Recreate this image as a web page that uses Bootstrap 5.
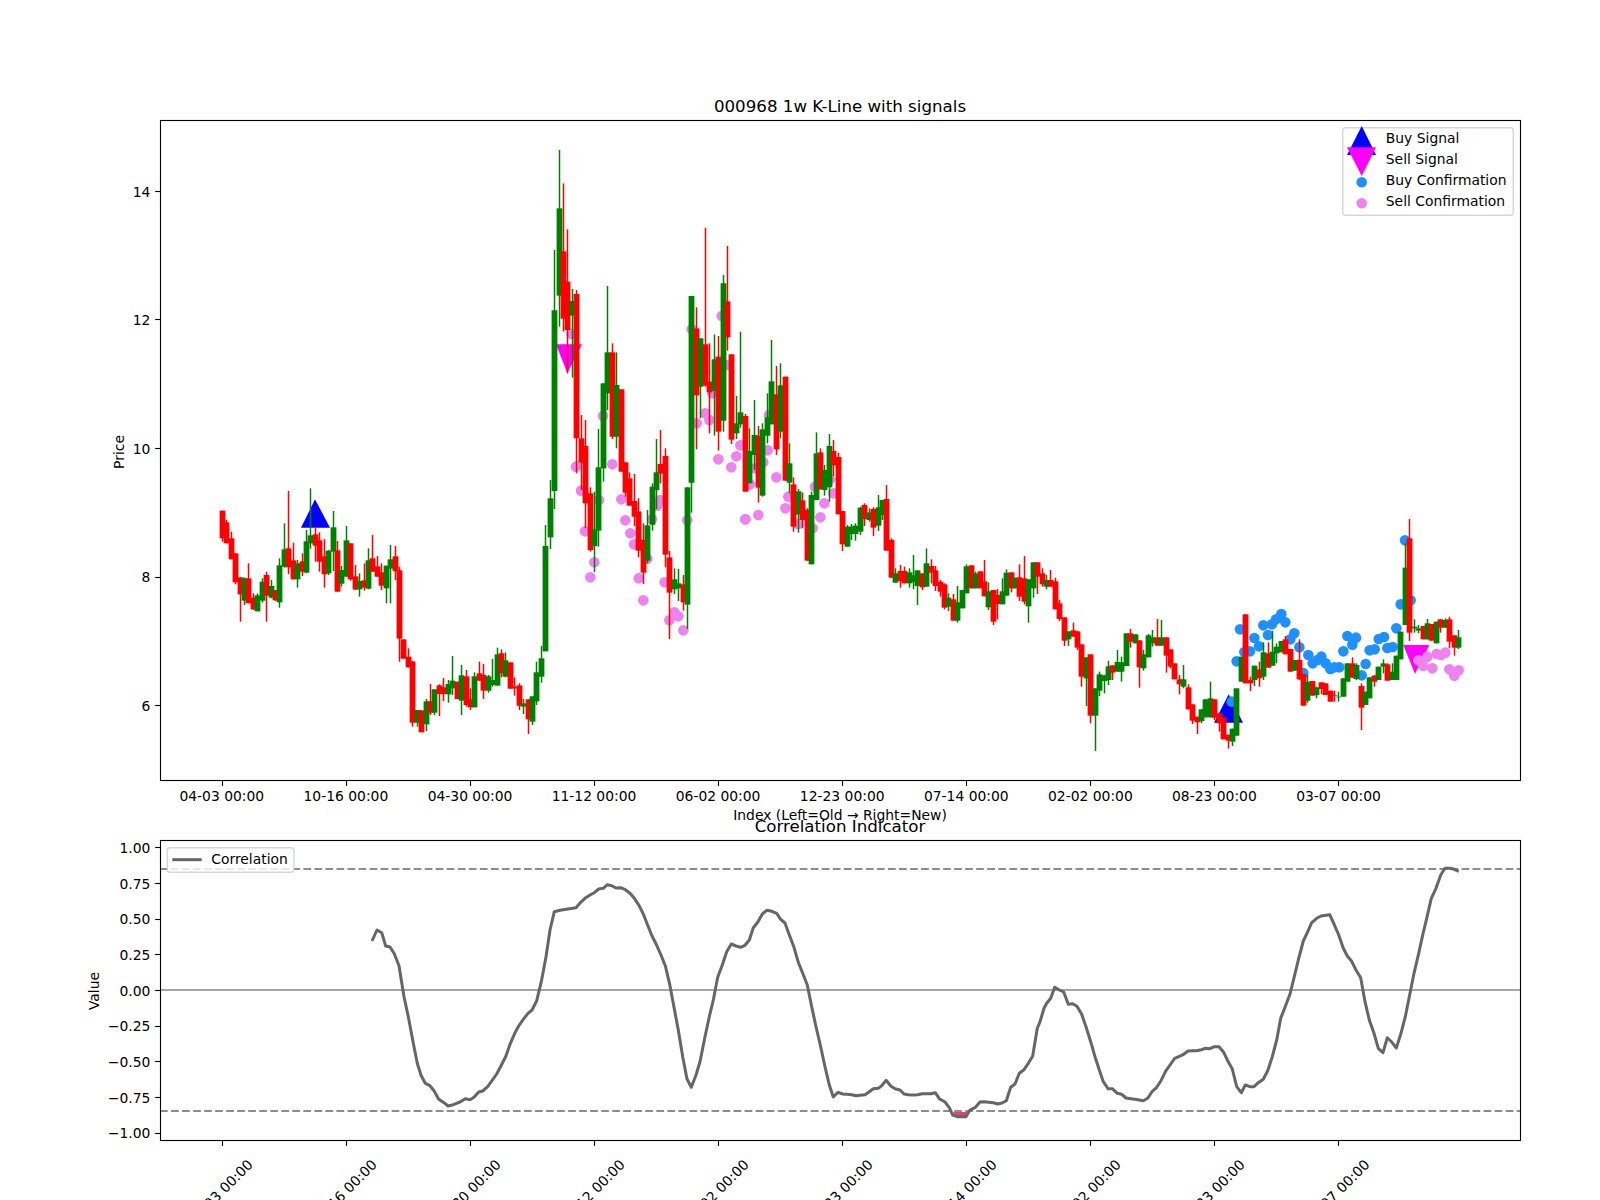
<!DOCTYPE html>
<html lang="en">
<head>
<meta charset="utf-8">
<title>000968 1w K-Line with signals</title>
<link href="https://cdn.jsdelivr.net/npm/bootstrap@5.3.0/dist/css/bootstrap.min.css" rel="stylesheet">
<style>
html,body{margin:0;padding:0;background:#fff;overflow:hidden}
.figure-wrap{width:1600px;height:1200px}
.figure-wrap svg{display:block}
.figure-wrap text{font-family:"DejaVu Sans",sans-serif;font-size:13.89px;fill:#000}
.figure-wrap text.plot-title{font-size:16.67px;text-anchor:middle}
.figure-wrap text.xlab{text-anchor:middle}
.figure-wrap text.ylab{text-anchor:end}
.tickmark{stroke:#000;stroke-width:1.11}
.frame{fill:none;stroke:#000;stroke-width:1.11}
.legend-box{fill:rgba(255,255,255,.8);stroke:#ccc;stroke-opacity:.8;stroke-width:1.39}
.limit-line{stroke:#808080;stroke-opacity:.9;stroke-width:2.08;stroke-dasharray:7.7 3.33}
.zero-line{stroke:#808080;stroke-opacity:.7;stroke-width:2.08}
.corr-line{fill:none;stroke:#666;stroke-width:3;stroke-linejoin:round}
</style>
</head>
<body>
<div class="figure-wrap d-flex bg-white">
<svg xmlns="http://www.w3.org/2000/svg" width="1600" height="1200" viewBox="0 0 1600 1200">
  <g id="markers">
    <polygon points="315,499.3 301,527.7 330,527.7" fill="#0000ff"/>
    <polygon points="1228.7,694.3 1214,722.7 1243,722.7" fill="#0000ff"/>
    <polygon points="567.3,373.3 556,344.3 582,344.3" fill="#ff00ff"/>
    <polygon points="1415,674 1403.3,645 1429.3,645" fill="#ff00ff"/>
  </g>
  <g id="dots"></g>
  <g id="candles"></g>
  <rect class="frame" x="160.5" y="120.5" width="1360" height="660"/>
  <g id="mainticks"></g>
  <g>
    <text class="ylab" x="150.3" y="197">14</text>
    <text class="ylab" x="150.3" y="325">12</text>
    <text class="ylab" x="150.3" y="454">10</text>
    <text class="ylab" x="150.3" y="582">8</text>
    <text class="ylab" x="150.3" y="710.5">6</text>
    <text class="xlab" x="221.8" y="801">04-03 00:00</text>
    <text class="xlab" x="345.9" y="801">10-16 00:00</text>
    <text class="xlab" x="470" y="801">04-30 00:00</text>
    <text class="xlab" x="594" y="801">11-12 00:00</text>
    <text class="xlab" x="718.1" y="801">06-02 00:00</text>
    <text class="xlab" x="842.2" y="801">12-23 00:00</text>
    <text class="xlab" x="966.3" y="801">07-14 00:00</text>
    <text class="xlab" x="1090.4" y="801">02-02 00:00</text>
    <text class="xlab" x="1214.4" y="801">08-23 00:00</text>
    <text class="xlab" x="1338.5" y="801">03-07 00:00</text>
    <text class="xlab" x="840" y="820">Index (Left=Old → Right=New)</text>
    <text class="xlab" transform="translate(124 452) rotate(-90)">Price</text>
    <text class="plot-title" x="840" y="111.7">000968 1w K-Line with signals</text>
  </g>
  <g>
    <rect class="legend-box" x="1342.7" y="127.7" width="170.6" height="87.6" rx="3"/>
    <polygon points="1361.7,126 1347,155 1376,155" fill="#0000ff"/>
    <polygon points="1361.7,176 1347,147.3 1376,147.3" fill="#ff00ff"/>
    <circle cx="1361.7" cy="182.3" r="5.3" fill="#1e90ff"/>
    <circle cx="1361.7" cy="203.3" r="5.3" fill="#ee82ee"/>
    <text x="1385.8" y="143.3">Buy Signal</text>
    <text x="1385.8" y="164.3">Sell Signal</text>
    <text x="1385.8" y="185.3">Buy Confirmation</text>
    <text x="1385.8" y="206.3">Sell Confirmation</text>
  </g>

  <line class="limit-line" x1="160" y1="869" x2="1520" y2="869"/>
  <line class="limit-line" x1="160" y1="1111" x2="1520" y2="1111"/>
  <line class="zero-line" x1="160" y1="990" x2="1520" y2="990"/>
  <polygon points="953.3,1112 967.3,1112 965.5,1116 955,1116" fill="#e8406a"/>
  <polyline id="corr" class="corr-line" points=""/>
  <rect class="frame" x="160.5" y="840.5" width="1360" height="300"/>
  <g id="subticks"></g>
  <g>
    <text class="ylab" x="150.3" y="852.8">1.00</text>
    <text class="ylab" x="150.3" y="888.5">0.75</text>
    <text class="ylab" x="150.3" y="924.2">0.50</text>
    <text class="ylab" x="150.3" y="959.9">0.25</text>
    <text class="ylab" x="150.3" y="995.6">0.00</text>
    <text class="ylab" x="150.3" y="1031.3">−0.25</text>
    <text class="ylab" x="150.3" y="1067">−0.50</text>
    <text class="ylab" x="150.3" y="1102.7">−0.75</text>
    <text class="ylab" x="150.3" y="1138.4">−1.00</text>
    <text class="xlab" transform="translate(98.5 991) rotate(-90)">Value</text>
    <text class="plot-title" x="840" y="831.7">Correlation Indicator</text>
    <rect class="legend-box" x="167.3" y="847.7" width="126.7" height="24.6" rx="3"/>
    <line x1="172.3" y1="859.7" x2="201.7" y2="859.7" stroke="#666" stroke-width="3"/>
    <text x="211.3" y="864">Correlation</text>
  </g>
  <g>
    <text class="xlab" dominant-baseline="central" transform="translate(220.3 1192) rotate(-45)">04-03 00:00</text>
    <text class="xlab" dominant-baseline="central" transform="translate(344.3 1192) rotate(-45)">10-16 00:00</text>
    <text class="xlab" dominant-baseline="central" transform="translate(468.3 1192) rotate(-45)">04-30 00:00</text>
    <text class="xlab" dominant-baseline="central" transform="translate(592.3 1192) rotate(-45)">11-12 00:00</text>
    <text class="xlab" dominant-baseline="central" transform="translate(716.3 1192) rotate(-45)">06-02 00:00</text>
    <text class="xlab" dominant-baseline="central" transform="translate(840.3 1192) rotate(-45)">12-23 00:00</text>
    <text class="xlab" dominant-baseline="central" transform="translate(964.3 1192) rotate(-45)">07-14 00:00</text>
    <text class="xlab" dominant-baseline="central" transform="translate(1088.3 1192) rotate(-45)">02-02 00:00</text>
    <text class="xlab" dominant-baseline="central" transform="translate(1212.3 1192) rotate(-45)">08-23 00:00</text>
    <text class="xlab" dominant-baseline="central" transform="translate(1337 1192) rotate(-45)">03-07 00:00</text>
  </g>
</svg>
</div>
<script src="https://cdn.jsdelivr.net/npm/bootstrap@5.3.0/dist/js/bootstrap.bundle.min.js"></script>
<script>
var NS='http://www.w3.org/2000/svg';
function el(parent,name,attrs){var e=document.createElementNS(NS,name);for(var k in attrs)e.setAttribute(k,attrs[k]);parent.appendChild(e);return e;}
// candles: colour, wick top, body top, body bottom, wick bottom, in 3x-crop offsets from a base row
var segA="R 212 212 295 305,R 240 247 310 310,R 275 295 358 358,R 340 340 427 433,R 412 412 463 545,G 412 415 482 495,R 370 415 490 490,R 460 473 508 510,G 460 466 514 514,G 415 425 482 488,R 395 405 467 545,G 420 438 473 475,R 450 450 481 483,G 355 376 487 503,G 250 328 380 383,R 153 325 382 402,R 308 361 418 418,G 360 370 418 443,R 340 364 395 408,G 270 304 398 400,G 145 286 310 326,R 262 283 317 365,R 277 301 365 395,R 297 349 403 443,G 330 332 400 405,G 213 262 335 393,R 303 331 455 455,G 378 390 431 440,G 258 301 410 410,R 310 310 418 422,R 375 409 449 449,G 400 423 448 470,R 370 421 443 452,G 325 361 446 448,R 285 355 395 395,R 348 379 410 410,R 370 397 437 450,G 377 377 445 490,G 315 358 386 490,R 318 349 394 420,R 380 391 596 665,R 598 598 656 656,R 625 650 682 682,R 664 664 848 860,G 810 810 848 860,R 811 811 877 877,G 777 784 853 873,R 732 784 818 825,G 748 748 818 825,R 733 736 762 828,R 714 742 762 783,G 720 732 763 788,"+
"G 648 722 745 765,R 725 725 777 777,G 675 706 782 825,R 690 709 795 800,R 745 778 802 810,G 697 709 802 802,R 665 700 722 722,R 672 705 752 777,G 705 709 752 758,G 657 720 735 740,G 623 643 737 737,R 628 640 700 712,G 637 661 710 712,R 667 667 746 746,R 712 740 745 767,R 730 736 797 810,G 777 790 800 822,R 778 778 838 882,G 769 769 845 855,G 665 697 784 795,G 618 655 710 728,G 255 318 634 634,G 120 175 292 327,"+
"G -570 -389 153 207,G -870 -695 -433 -340,R -770 -566 -364 -325,R -632 -475 -330 -200,G -453 -417 -373 -187,R -450 -438 -5 100,R -75 -5 68 150,R -60 18 190 265,R 142 160 330 335,G 155 268 318 397,G -33 82 272 320,G -170 -170 85 125,G -462 -263 -140 -90,R -290 -263 -10 -3,G -263 -165 -10 25,R -152 -152 95 95,R 67 67 158 170,R 97 115 197 197,R 102 183 230 258,R 175 214 332 352,R 250 300 398 432,G 210 256 362 370,G 130 140 254 272,G -3 97 150 207,R -30 72 100 130,R 25 48 344 382,R 333 352 458 597,G 385 418 448 462,G 387 430 445 483,R 405 433 487 512,G 405 142 494 567,G -432 -432 128 218,R -398 -335 -134 28,G -305 -305 -160 -65,R -637 -287 -163 -160,R -290 -175 -143 -20,G -317 -242 -147 -13,R -312 -250 -25 32,G -495 -470 -58 -25,R -582 -416 -308 -268,R -257 -257 -1 12,G -132 -50 -20 -3,G -325 -83 -47 -37,R -78 -72 155 155,G -35 33 130 130,"+
"G -120 -15 45 90,R -42 -12 143 188,G -50 -32 167 170,G -140 -68 -13 10,G -300 -176 -47 -47,R -222 -137 28 45,G -230 -164 -25 -5,R -190 -190 122 122,G 10 70 128 160,R 112 133 260 275,G 147 154 224 278,R 157 181 240 265,R 205 210 362 362,G 155 165 373 373,G -23 40 180 180,R 25 37 148 148,G 75 90 150 167,G -18 18 142 185,R 0 33 76 108,R 38 51 223 223,R 213 213 313 333,G 255 260 320 320,"+
"G 252 260 282 300,G 250 257 282 302,G 200 203 275 285,R 190 195 237 258,G 205 217 240 245,R 202 207 263 288,G 165 202 257 273,G 180 180 225 240,R 135 177 332 332,R 295 300 413 413,G 385 400 428 428,R 375 393 423 443,R 380 393 430 430,G 385 397 430 443,G 345 406 426 448,G 391 391 438 495,R 400 400 442 450,G 325 370 440 440,R 358 378 398 430,R 378 391 438 453,R 420 425 455 470,R 430 433 503 508,G 460 473 500 513,R 462 478 542 542,G 438 487 542 548,G 450 450 505 505,G 373 379 460 460,R 376 376 445 445,G 395 400 445 445,R 394 394 445 445,R 360 424 469 469,G 427 454 502 510,R 450 450 545 555,R 447 465 492 537,G 415 454 493 493,G 388 398 467 467,R 397 397 445 457,G 413 413 445 445,R 373 412 470 483,R 348 415 485 493,G 418 418 499 548,G 367 367 445 473,R 367 367 410 462,R 385 400 433 440,G 405 420 440 448,R 390 420 440 440,R 413 424 508 508,R 480 490 537 543,R 532 532 602 618,G 574 574 598 618,R 548 571 590 590,R 574 574 623 630,R 613 613 710 740,G 652 652 715 798,R 643 643 827 850,G 745 745 827 933,G 695 703 752 768,G 706 706 723 760,G 662 679 720 735,R 676 676 698 720,G 630 666 695 695,G 650 667 695 725,G 580 580 678 678,R 567 580 605 623,G 583 583 610 610,R 601 601 682 743,G 630 643 685 692,G 582 586 652 652";
var segB="G 390 412 430 440,R 357 412 437 437,G 360 412 437 437,R 412 412 467 518,R 448 448 500 505,R 490 490 538 538,R 525 538 553 583,G 495 538 560 565,R 553 562 628 628,R 613 613 662 672,R 650 650 667 702,G 628 628 663 670,G 598 598 652 652,G 545 595 652 652,R 598 598 653 660,R 640 640 670 695,R 652 652 718 718,R 704 704 722 746,G 686 686 725 738,G 565 565 707 707,G 470 470 545 545,R 343 343 550 550,R 530 540 550 573,G 497 497 540 558,R 485 508 535 560,G 427 457 530 540,R 427 460 503 503,G 393 455 497 497,G 430 440 460 490,G 423 423 457 457,R 408 418 463 463,R 447 447 515 515,G 480 480 512 512,R 418 480 538 540,R 522 522 617 617,G 525 545 602 608,R 543 543 587 587,G 560 562 585 595,R 547 547 567 583,R 550 550 585 585,R 572 572 605 605,R 572 586 588 605,G 575 590 592 605,G 535 535 590 590,G 490 490 545 545,R 472 490 533 533,G 490 495 537 540,R 550 558 623 690,G 575 575 615 615,G 532 532 595 595,R 525 527 545 560,G 500 500 540 540,G 478 490 500 520,R 490 493 542 542,G 490 515 540 540,G 467 467 540 540,G 395 395 478 478,G 130 203 375 375,R 57 115 398 423,G 358 380 385 398,G 375 385 392 400,R 378 378 418 418,G 357 370 418 418,R 372 372 422 422,G 365 365 430 430,R 358 358 383 398,G 355 360 383 383,R 350 358 425 445,R 406 406 443 467,G 390 412 443 447";
var cg=document.getElementById('candles');
var idx=0;
function addCandles(str,base){str.split(',').forEach(function(s){var p=s.split(' '),col=p[0]==='R'?'#ff0000':'#008000';
  var Y=function(v){return base+(+v)/3;},x=221.8+4.431*idx;
  var h=Math.min(Y(p[1]),Y(p[2])),t=Y(p[2]),b=Y(p[3]),l=Math.max(Y(p[4]),Y(p[3]));
  var wx=Math.round(x)+0.5,bx=Math.round(x)+0.5;
  el(cg,'line',{x1:wx,x2:wx,y1:h,y2:l,stroke:col,'stroke-width':1.5});
  el(cg,'line',{x1:bx,x2:bx,y1:t,y2:b,stroke:col,'stroke-width':5.8});
  idx++;});}
addCandles(segA,440);addCandles(segB,500);
// confirmation dots, as 3x-crop coordinates from an origin
var dg=document.getElementById('dots');
function addDots(ox,oy,list,col){list.forEach(function(p){el(dg,'circle',{cx:ox+p[0]/3,cy:oy+p[1]/3,r:5.3,fill:col});});}
var V='#ee82ee',B='#1e90ff';
addDots(450,440,[[378,80],[393,152],[447,181],[405,274],[433,367],[421,412],[487,73],[514,178],[526,241],[541,280],[552,313],[566,415],[580,481],[592,356],[606,238],[621,197],[630,180],[644,427],[658,541],[673,517],[685,529],[700,571],[712,241],[805,58],[844,82],[859,49],[871,16],[886,238],[895,135]],V);
addDots(450,130,[[365,612],[725,598],[459,858],[740,880],[765,850],[778,870],[787,790],[815,558],[830,705]],V);
addDots(700,200,[[150,853],[165,805],[190,787],[203,751],[175,945],[136,958],[229,832],[265,890],[256,925],[295,972],[338,985],[345,860],[373,910],[361,952],[400,880],[390,838],[207,645]],V);
addDots(1150,500,[[765,121],[782,301],[752,313],[739,385],[702,411],[686,417],[674,448],[659,451],[728,441],[712,444],[647,492],[635,526],[618,413],[607,434],[592,408],[580,454],[568,502],[553,502],[541,507],[527,490],[514,470],[503,480],[488,490],[475,465],[460,519],[448,442],[433,400],[421,418],[406,367],[394,342],[378,358],[366,373],[340,376],[354,405],[327,439],[313,414],[300,454],[283,456],[270,388],[260,484],[245,605]],B);
addDots(1150,500,[[805,481],[820,498],[847,505],[832,470],[860,462],[873,465],[886,458],[898,508],[913,527],[926,511]],V);
// ticks
var mt=document.getElementById('mainticks'),st=document.getElementById('subticks');
[191.5,319.5,448.5,577.5,705.5].forEach(function(y){el(mt,'line',{'class':'tickmark',x1:155.1,x2:160,y1:y,y2:y});});
for(var k=0;k<10;k++){var tx=Math.floor(221.8+124.07*k+0.5)+0.5;
  el(mt,'line',{'class':'tickmark',x1:tx,x2:tx,y1:781,y2:785.9});
  el(st,'line',{'class':'tickmark',x1:tx,x2:tx,y1:1141,y2:1145.9});}
for(var j=0;j<9;j++){var ty=Math.floor(847.6+35.7*j)+0.5;el(st,'line',{'class':'tickmark',x1:155.1,x2:160,y1:ty,y2:ty});}
// correlation line, 3x-crop coordinates per crop
var z8=[[876,423],[891,390],[905,398],[917,438],[930,441],[943,461],[957,497],[972,590],[985,650],[1000,730],[1012,790],[1023,826],[1036,850],[1050,857],[1062,872],[1076,898],[1092,908],[1104,918],[1120,914],[1140,906],[1156,896],[1170,899],[1182,892],[1196,876],[1208,873],[1223,860],[1236,842],[1250,822],[1264,796],[1278,768],[1290,733],[1304,700],[1316,678],[1330,658],[1344,640],[1356,630],[1370,602],[1384,545],[1398,470],[1410,390],[1423,335]];
var z9=[[0,331],[48,323],[62,307],[75,295],[90,285],[103,278],[116,267],[130,265],[142,254],[155,257],[168,264],[182,263],[196,269],[210,280],[223,295],[237,316],[250,342],[263,376],[276,408],[290,436],[303,465],[316,497],[329,553],[342,622],[355,690],[368,770],[381,837],[394,862],[408,825],[420,785],[435,710],[448,650],[460,600],[473,532],[487,495],[500,455],[514,432],[528,438],[542,442],[555,436],[568,420],[580,383],[594,365],[607,342],[620,331],[636,334],[650,340],[662,358],[675,369],[688,405],[702,442],[715,487],[728,520],[742,555],[755,620],[768,680],[781,735],[795,800],[808,855],[820,891],[834,877],[848,882],[861,883],[875,884],[888,887],[900,886],[915,884],[927,876],[940,866],[955,865],[966,856],[979,841],[992,858],[1005,866],[1020,870],[1032,882],[1045,884],[1060,885],[1073,884],[1087,881],[1113,881],[1126,878],[1138,896],[1155,906],[1168,923],[1178,945],[1192,950],[1218,950],[1230,930],[1245,923],[1260,906],[1273,905],[1300,908],[1313,912],[1326,909],[1339,902],[1352,862],[1365,852],[1378,820],[1392,809],[1405,790],[1418,768],[1432,685]];
var z10=[[0,665],[12,625],[20,610],[32,595],[44,562],[58,570],[71,576],[85,613],[98,611],[111,619],[125,643],[138,680],[152,725],[165,770],[178,810],[190,845],[204,866],[217,866],[232,880],[245,883],[258,894],[272,896],[285,898],[298,900],[310,902],[323,895],[336,875],[350,862],[363,842],[378,812],[390,795],[404,775],[418,769],[431,763],[444,753],[458,752],[470,752],[484,749],[497,745],[510,746],[523,740],[537,740],[550,755],[563,782],[577,807],[590,860],[604,878],[616,855],[630,860],[642,860],[655,848],[670,838],[683,812],[697,770],[710,720],[722,655],[735,622],[750,582],[763,530],[775,480],[790,423],[802,398],[815,368],[830,355],[843,348],[869,344],[882,372],[896,405],[910,445],[922,468],[935,484],[948,510],[962,533],[975,605],[988,660],[1002,700],[1015,745],[1029,758],[1042,713],[1056,727],[1069,744],[1083,700],[1096,650],[1110,580],[1122,520],[1136,460],[1148,405],[1160,355],[1174,295],[1188,265],[1202,225],[1215,205],[1230,205],[1243,208],[1256,214]];
function pts(ox,a){return a.map(function(p){return (ox+p[0]/3).toFixed(1)+','+(800+p[1]/3).toFixed(1);}).join(' ');}
document.getElementById('corr').setAttribute('points',pts(80,z8)+' '+pts(560,z9)+' '+pts(1040,z10));
</script>
</body>
</html>
